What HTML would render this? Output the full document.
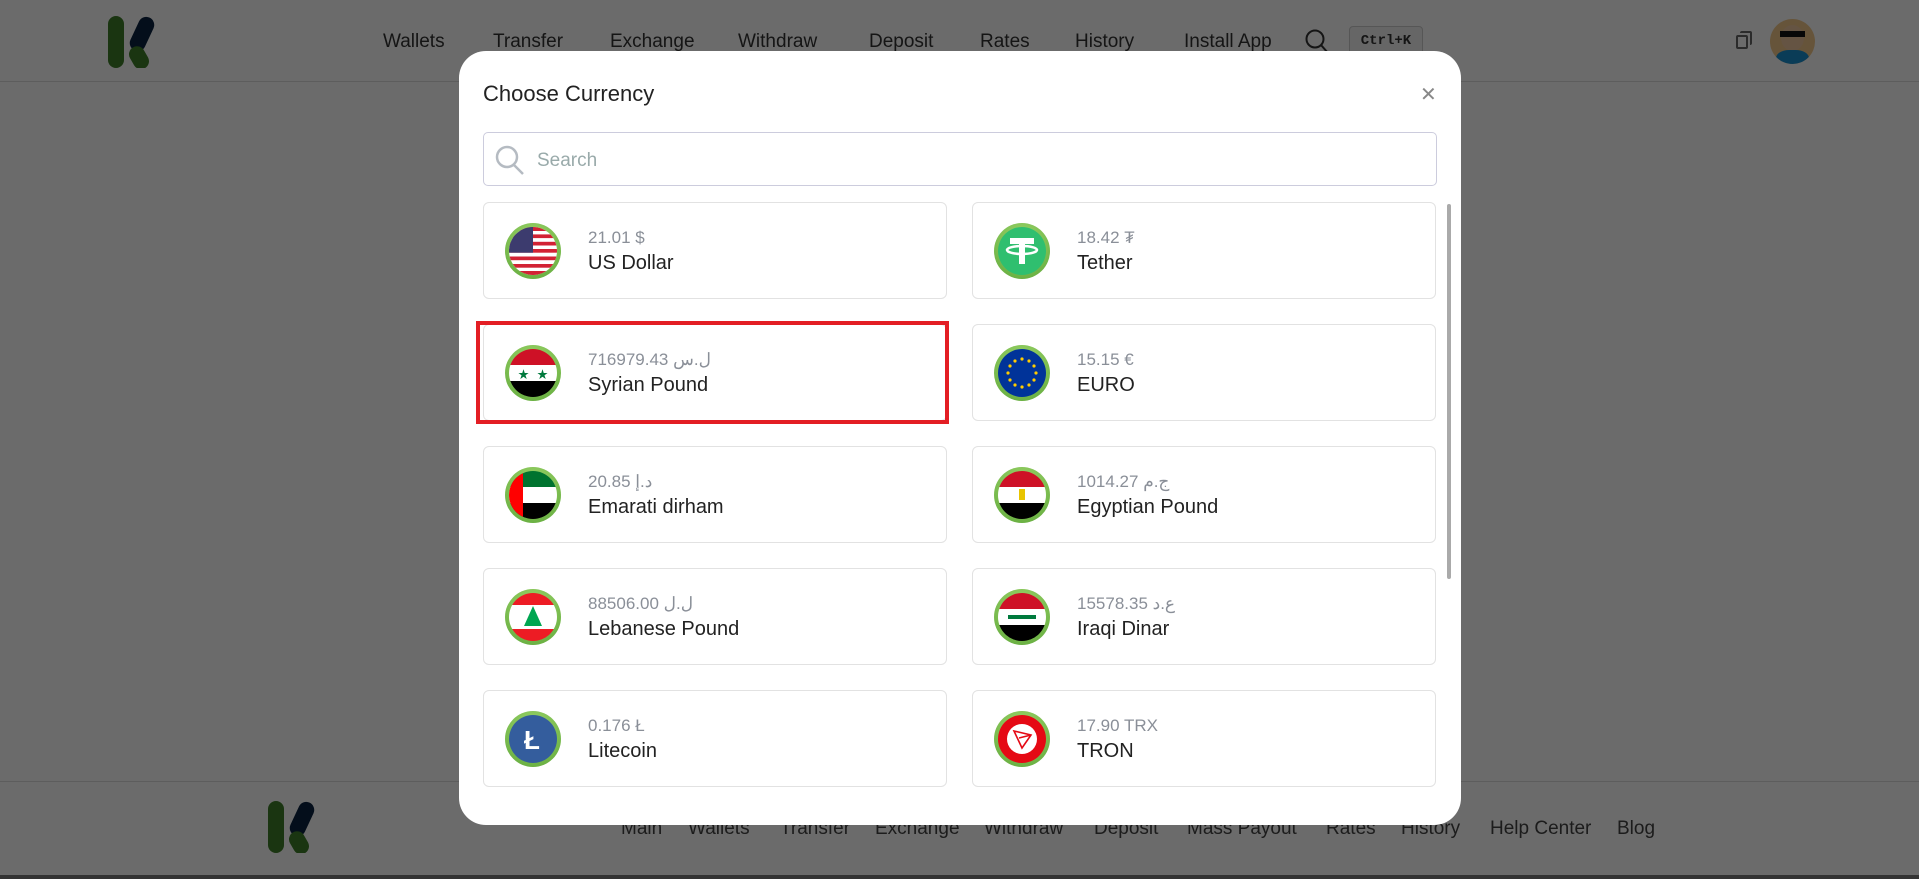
<!DOCTYPE html>
<html><head><meta charset="utf-8">
<style>
*{box-sizing:border-box;margin:0;padding:0}
body{width:1919px;height:879px;overflow:hidden;background:#fff;font-family:"Liberation Sans","Noto Sans CJK SC",sans-serif;position:relative}
.hdr{position:absolute;left:0;top:0;width:1919px;height:82px;border-bottom:1px solid #ddd;background:#fff}
.nav{position:absolute;top:31px;font-size:19px;color:#333}
.ftr{position:absolute;left:0;top:781px;width:1919px;height:94px;border-top:1px solid #ddd;background:#fff}
.fl{position:absolute;top:36px;font-size:19px;color:#444}
.ov{position:absolute;left:0;top:0;width:1919px;height:879px;background:rgba(0,0,0,0.58)}
.bar{position:absolute;left:0;top:875px;width:1919px;height:4px;background:#333}
.modal{position:absolute;left:459px;top:51px;width:1002px;height:774px;background:#fff;border-radius:27px}
.title{position:absolute;left:24px;top:30px;font-size:22px;color:#222}
.close{position:absolute;left:961px;top:31px;font-size:20px;color:#888}
.search{position:absolute;left:24px;top:81px;width:954px;height:54px;border:1px solid #ccd;border-radius:5px}
.search span{position:absolute;left:53px;top:17px;font-size:19px;color:#9aa}
.card{position:absolute;width:464px;height:97px;border:1px solid #e2e2e2;border-radius:6px;background:#fff}
.ic{position:absolute;left:21px;top:20px;width:56px;height:56px;border-radius:50%;background:radial-gradient(circle at 50% 30%,#9ed66b,#5fa83a);padding:4px}
.ic svg{width:48px;height:48px;border-radius:50%;display:block}
.amt{position:absolute;left:104px;top:25px;font-size:17px;color:#8a8f98}
.nm{position:absolute;left:104px;top:49px;font-size:20px;color:#222}
.sb{position:absolute;left:988px;top:153px;width:4px;height:375px;background:#aaa;border-radius:2px}
.red{position:absolute;left:476px;top:321px;width:473px;height:103px;border:4px solid #e31e24}
</style></head><body>
<div class="hdr">
<svg style="position:absolute;left:108px;top:16px" width="56" height="52" viewBox="0 0 56 52"><rect x="0" y="0" width="16" height="52" rx="8" fill="#3f7f2a"/><rect x="26" y="0" width="16" height="36" rx="8" fill="#0b2340" transform="rotate(25 34 18)"/><rect x="22" y="30" width="16" height="24" rx="8" fill="#3f7f2a" transform="rotate(-30 30 40)"/></svg>
<span class="nav" style="left:383px">Wallets</span><span class="nav" style="left:493px">Transfer</span><span class="nav" style="left:610px">Exchange</span><span class="nav" style="left:738px">Withdraw</span><span class="nav" style="left:869px">Deposit</span><span class="nav" style="left:980px">Rates</span><span class="nav" style="left:1075px">History</span><span class="nav" style="left:1184px">Install App</span>
<svg style="position:absolute;left:1304px;top:28px" width="26" height="28" viewBox="0 0 26 28"><circle cx="11" cy="11" r="8.5" fill="none" stroke="#333" stroke-width="2"/><line x1="17" y1="17" x2="24" y2="25" stroke="#333" stroke-width="2"/></svg>
<div style="position:absolute;left:1349px;top:26px;width:74px;height:30px;border:1px solid #ccc;border-radius:4px;background:#f3f3f3;font:bold 14px 'Liberation Mono',monospace;color:#333;text-align:center;line-height:28px">Ctrl+K</div>
<div style="position:absolute;left:1736px;top:35px;width:12px;height:14px;border:2px solid #666;border-radius:2px"></div><div style="position:absolute;left:1740px;top:31px;width:12px;height:14px;border:2px solid #666;border-radius:2px;border-left:none;border-bottom:none"></div>
<div style="position:absolute;left:1770px;top:19px;width:45px;height:45px;border-radius:50%;background:#f2c98a;overflow:hidden"><div style="position:absolute;left:11px;top:6px;width:23px;height:26px;border-radius:50%;background:#f0c9a0"></div><div style="position:absolute;left:10px;top:12px;width:25px;height:6px;background:#111"></div><div style="position:absolute;left:6px;top:31px;width:33px;height:20px;border-radius:40% 40% 0 0;background:#1a8fd0"></div></div>
</div>
<div class="ftr">
<svg style="position:absolute;left:268px;top:19px" width="56" height="52" viewBox="0 0 56 52"><rect x="0" y="0" width="16" height="52" rx="8" fill="#3f7f2a"/><rect x="26" y="0" width="16" height="36" rx="8" fill="#0b2340" transform="rotate(25 34 18)"/><rect x="22" y="30" width="16" height="24" rx="8" fill="#3f7f2a" transform="rotate(-30 30 40)"/></svg>
<span class="fl" style="left:621px">Main</span><span class="fl" style="left:688px">Wallets</span><span class="fl" style="left:780px">Transfer</span><span class="fl" style="left:875px">Exchange</span><span class="fl" style="left:984px">Withdraw</span><span class="fl" style="left:1094px">Deposit</span><span class="fl" style="left:1187px">Mass Payout</span><span class="fl" style="left:1326px">Rates</span><span class="fl" style="left:1401px">History</span><span class="fl" style="left:1490px">Help Center</span><span class="fl" style="left:1617px">Blog</span>
</div>
<div class="ov"></div>
<div class="bar"></div>
<div class="modal">
<div class="title">Choose Currency</div>
<div class="close">✕</div>
<div class="search"><svg style="position:absolute;left:10px;top:11px" width="32" height="32" viewBox="0 0 32 32"><circle cx="13" cy="13" r="10" fill="none" stroke="#b5bbc2" stroke-width="2.5"/><line x1="20" y1="21" x2="29" y2="30" stroke="#b5bbc2" stroke-width="2.5"/></svg><span>Search</span></div>
<div class="sb"></div>
<div class="card" style="left:24px;top:151px"><div class="ic"><svg viewBox="0 0 48 48"><rect width="48" height="48" fill="#fff"/><g fill="#d22234"><rect y="0" width="48" height="4"/><rect y="7.4" width="48" height="3.7"/><rect y="14.8" width="48" height="3.7"/><rect y="22" width="48" height="3.7"/><rect y="29.5" width="48" height="3.7"/><rect y="37" width="48" height="3.7"/><rect y="44" width="48" height="4"/></g><rect width="24" height="25.7" fill="#3c3b6e"/></svg></div><div class="amt">21.01 $</div><div class="nm">US Dollar</div></div>
<div class="card" style="left:513px;top:151px"><div class="ic"><svg viewBox="0 0 48 48"><rect width="48" height="48" fill="#2fbf6f"/><rect x="12" y="11" width="24" height="6" fill="#fff"/><rect x="21" y="11" width="6" height="26" fill="#fff"/><ellipse cx="24" cy="23" rx="15" ry="4" fill="none" stroke="#fff" stroke-width="2.5"/></svg></div><div class="amt">18.42 ₮</div><div class="nm">Tether</div></div>
<div class="card" style="left:24px;top:273px"><div class="ic"><svg viewBox="0 0 48 48"><rect width="48" height="16" fill="#ce1126"/><rect y="16" width="48" height="16" fill="#fff"/><rect y="32" width="48" height="16" fill="#000"/><text x="9" y="29" font-size="11" fill="#007a3d">★</text><text x="28" y="29" font-size="11" fill="#007a3d">★</text></svg></div><div class="amt">716979.43 ل.س</div><div class="nm">Syrian Pound</div></div>
<div class="card" style="left:513px;top:273px"><div class="ic"><svg viewBox="0 0 48 48"><rect width="48" height="48" fill="#003399"/><g fill="#fc0"><circle cx="24" cy="10" r="1.6"/><circle cx="31" cy="12" r="1.6"/><circle cx="36" cy="17" r="1.6"/><circle cx="38" cy="24" r="1.6"/><circle cx="36" cy="31" r="1.6"/><circle cx="31" cy="36" r="1.6"/><circle cx="24" cy="38" r="1.6"/><circle cx="17" cy="36" r="1.6"/><circle cx="12" cy="31" r="1.6"/><circle cx="10" cy="24" r="1.6"/><circle cx="12" cy="17" r="1.6"/><circle cx="17" cy="12" r="1.6"/></g></svg></div><div class="amt">15.15 €</div><div class="nm">EURO</div></div>
<div class="card" style="left:24px;top:395px"><div class="ic"><svg viewBox="0 0 48 48"><rect width="48" height="16" fill="#00732f"/><rect y="16" width="48" height="16" fill="#fff"/><rect y="32" width="48" height="16" fill="#000"/><rect width="14" height="48" fill="#ff0000"/></svg></div><div class="amt">20.85 د.إ</div><div class="nm">Emarati dirham</div></div>
<div class="card" style="left:513px;top:395px"><div class="ic"><svg viewBox="0 0 48 48"><rect width="48" height="16" fill="#ce1126"/><rect y="16" width="48" height="16" fill="#fff"/><rect y="32" width="48" height="16" fill="#000"/><rect x="21" y="18" width="6" height="11" fill="#e8c400"/></svg></div><div class="amt">1014.27 ج.م</div><div class="nm">Egyptian Pound</div></div>
<div class="card" style="left:24px;top:517px"><div class="ic"><svg viewBox="0 0 48 48"><rect width="48" height="12" fill="#ed1c24"/><rect y="12" width="48" height="24" fill="#fff"/><rect y="36" width="48" height="12" fill="#ed1c24"/><polygon points="24,13 33,33 15,33" fill="#00a651"/></svg></div><div class="amt">88506.00 ل.ل</div><div class="nm">Lebanese Pound</div></div>
<div class="card" style="left:513px;top:517px"><div class="ic"><svg viewBox="0 0 48 48"><rect width="48" height="16" fill="#ce1126"/><rect y="16" width="48" height="16" fill="#fff"/><rect y="32" width="48" height="16" fill="#000"/><rect x="10" y="22" width="28" height="4" fill="#007a3d"/></svg></div><div class="amt">15578.35 ع.د</div><div class="nm">Iraqi Dinar</div></div>
<div class="card" style="left:24px;top:639px"><div class="ic"><svg viewBox="0 0 48 48"><rect width="48" height="48" fill="#345d9d"/><text x="15" y="34" font-size="26" font-weight="bold" fill="#fff" font-family="Liberation Sans">Ł</text></svg></div><div class="amt">0.176 Ł</div><div class="nm">Litecoin</div></div>
<div class="card" style="left:513px;top:639px"><div class="ic"><svg viewBox="0 0 48 48"><rect width="48" height="48" fill="#e50914"/><circle cx="24" cy="24" r="15" fill="#fff"/><path d="M16 16 L33 20 L24 33 Z M16 16 L24 33 M33 20 L21 23" fill="none" stroke="#e50914" stroke-width="1.6"/></svg></div><div class="amt">17.90 TRX</div><div class="nm">TRON</div></div>
</div>
<div class="red"></div>
</body></html>
